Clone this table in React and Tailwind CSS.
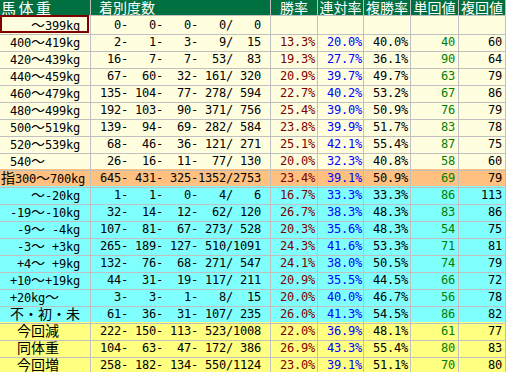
import React from "react";

const CREAM = "bg-[#ffffe0]";
const ORANGE = "bg-[#ffc080]";
const CYAN = "bg-[#80ffff]";
const YELLOW = "bg-[#ffff80]";

const rows = [
  ["   ～399kg", [0, 0, 0, 0, 0], null, CREAM],
  ["400～419kg", [2, 1, 3, 9, 15], ["13.3%", "20.0%", "40.0%", "40", "60"], CREAM],
  ["420～439kg", [16, 7, 7, 53, 83], ["19.3%", "27.7%", "36.1%", "90", "64"], CREAM],
  ["440～459kg", [67, 60, 32, 161, 320], ["20.9%", "39.7%", "49.7%", "63", "79"], CREAM],
  ["460～479kg", [135, 104, 77, 278, 594], ["22.7%", "40.2%", "53.2%", "67", "86"], CREAM],
  ["480～499kg", [192, 103, 90, 371, 756], ["25.4%", "39.0%", "50.9%", "76", "79"], CREAM],
  ["500～519kg", [139, 94, 69, 282, 584], ["23.8%", "39.9%", "51.7%", "83", "78"], CREAM],
  ["520～539kg", [68, 46, 36, 121, 271], ["25.1%", "42.1%", "55.4%", "87", "75"], CREAM],
  ["540～", [26, 16, 11, 77, 130], ["20.0%", "32.3%", "40.8%", "58", "60"], CREAM],
  ["指300～700kg", [645, 431, 325, 1352, 2753], ["23.4%", "39.1%", "50.9%", "69", "79"], ORANGE],
  ["   ～-20kg", [1, 1, 0, 4, 6], ["16.7%", "33.3%", "33.3%", "86", "113"], CYAN],
  ["-19～-10kg", [32, 14, 12, 62, 120], ["26.7%", "38.3%", "48.3%", "83", "86"], CYAN],
  [" -9～ -4kg", [107, 81, 67, 273, 528], ["20.3%", "35.6%", "48.3%", "54", "75"], CYAN],
  [" -3～ +3kg", [265, 189, 127, 510, 1091], ["24.3%", "41.6%", "53.3%", "71", "81"], CYAN],
  [" +4～ +9kg", [132, 76, 68, 271, 547], ["24.1%", "38.0%", "50.5%", "74", "79"], CYAN],
  ["+10～+19kg", [44, 31, 19, 117, 211], ["20.9%", "35.5%", "44.5%", "66", "72"], CYAN],
  ["+20kg～", [3, 3, 1, 8, 15], ["20.0%", "40.0%", "46.7%", "56", "78"], CYAN],
  ["不・初・未", [61, 36, 31, 107, 235], ["26.0%", "41.3%", "54.5%", "86", "82"], CYAN],
  [" 今回減", [222, 150, 113, 523, 1008], ["22.0%", "36.9%", "48.1%", "61", "77"], YELLOW],
  [" 同体重", [104, 63, 47, 172, 386], ["26.9%", "43.3%", "55.4%", "80", "83"], YELLOW],
  [" 今回増", [258, 182, 134, 550, 1124], ["23.0%", "39.1%", "51.1%", "70", "80"], YELLOW],
];

function fmt(c) {
  const p = (n, w) => String(n).padStart(w, " ");
  return `${p(c[0], 3)}-${p(c[1], 4)}-${p(c[2], 4)}-${p(c[3], 4)}/${p(c[4], 4)}`;
}

function Mix({ s }) {
  const parts = [];
  let buf = "";
  let cjk = null;
  for (const ch of s) {
    const isC = ch.charCodeAt(0) > 0xff;
    if (cjk !== null && isC !== cjk) {
      parts.push([buf, cjk]);
      buf = "";
    }
    cjk = isC;
    buf += ch;
  }
  if (buf) parts.push([buf, cjk]);
  return (
    <span className="leading-[16px]">
      {parts.map(([t, c], i) =>
        c ? (
          <span
            key={i}
            className="font-['Noto_Sans_CJK_JP',sans-serif] text-[14px] tracking-normal leading-[16px]"
          >
            {t}
          </span>
        ) : (
          <span key={i}>{t}</span>
        )
      )}
    </span>
  );
}

const GRID = "grid grid-cols-[91px_180px_47px_46px_47px_48px_47px]";
const CELL =
  "border-r border-b border-[#c0c0c0] flex items-center whitespace-pre";
const MONO =
  "font-['DejaVu_Sans_Mono',monospace] text-[12px] tracking-[-0.22px] leading-[16px]";

const hdrs = ["勝率", "連対率", "複勝率", "単回値", "複回値"];

export default function App() {
  return (
    <div className="w-[506px] h-[372px] overflow-hidden bg-white">
      <div
        className={`${GRID} h-[16px] bg-[#007040] text-white font-['Noto_Sans_CJK_JP',sans-serif] text-[14px] leading-[15px]`}
      >
        <div className={`${CELL} pl-[1px] text-[15px] tracking-[2.5px]`}>馬体重</div>
        <div className={`${CELL} pl-[8px]`}>着別度数</div>
        {hdrs.map((h) => (
          <div key={h} className={`${CELL} justify-center`}>
            {h}
          </div>
        ))}
      </div>
      {rows.map(([label, counts, vals, bg], idx) => (
        <div key={idx} className={`${GRID} h-[17px] ${bg} ${MONO} text-black`}>
          <div className={`${CELL} relative ${idx === 9 ? "pl-[1px]" : "pl-[10px]"}`}>
            <Mix s={label} />
            {idx === 0 && (
              <div className="absolute top-[-1px] left-0 right-[1px] bottom-[1px] border-2 border-[#800000]" />
            )}
          </div>
          <div className={`${CELL} justify-end pr-[9px]`}>{fmt(counts)}</div>
          <div className={`${CELL} justify-end pr-[2px] text-[#800000]`}>
            {vals ? vals[0] : ""}
          </div>
          <div className={`${CELL} justify-end pr-[1px] text-[#0000ff]`}>
            {vals ? vals[1] : ""}
          </div>
          <div className={`${CELL} justify-end pr-[2px]`}>{vals ? vals[2] : ""}</div>
          <div className={`${CELL} justify-end pr-[3px] text-[#008000]`}>
            {vals ? vals[3] : ""}
          </div>
          <div className={`${CELL} justify-end pr-[3px]`}>{vals ? vals[4] : ""}</div>
        </div>
      ))}
    </div>
  );
}
